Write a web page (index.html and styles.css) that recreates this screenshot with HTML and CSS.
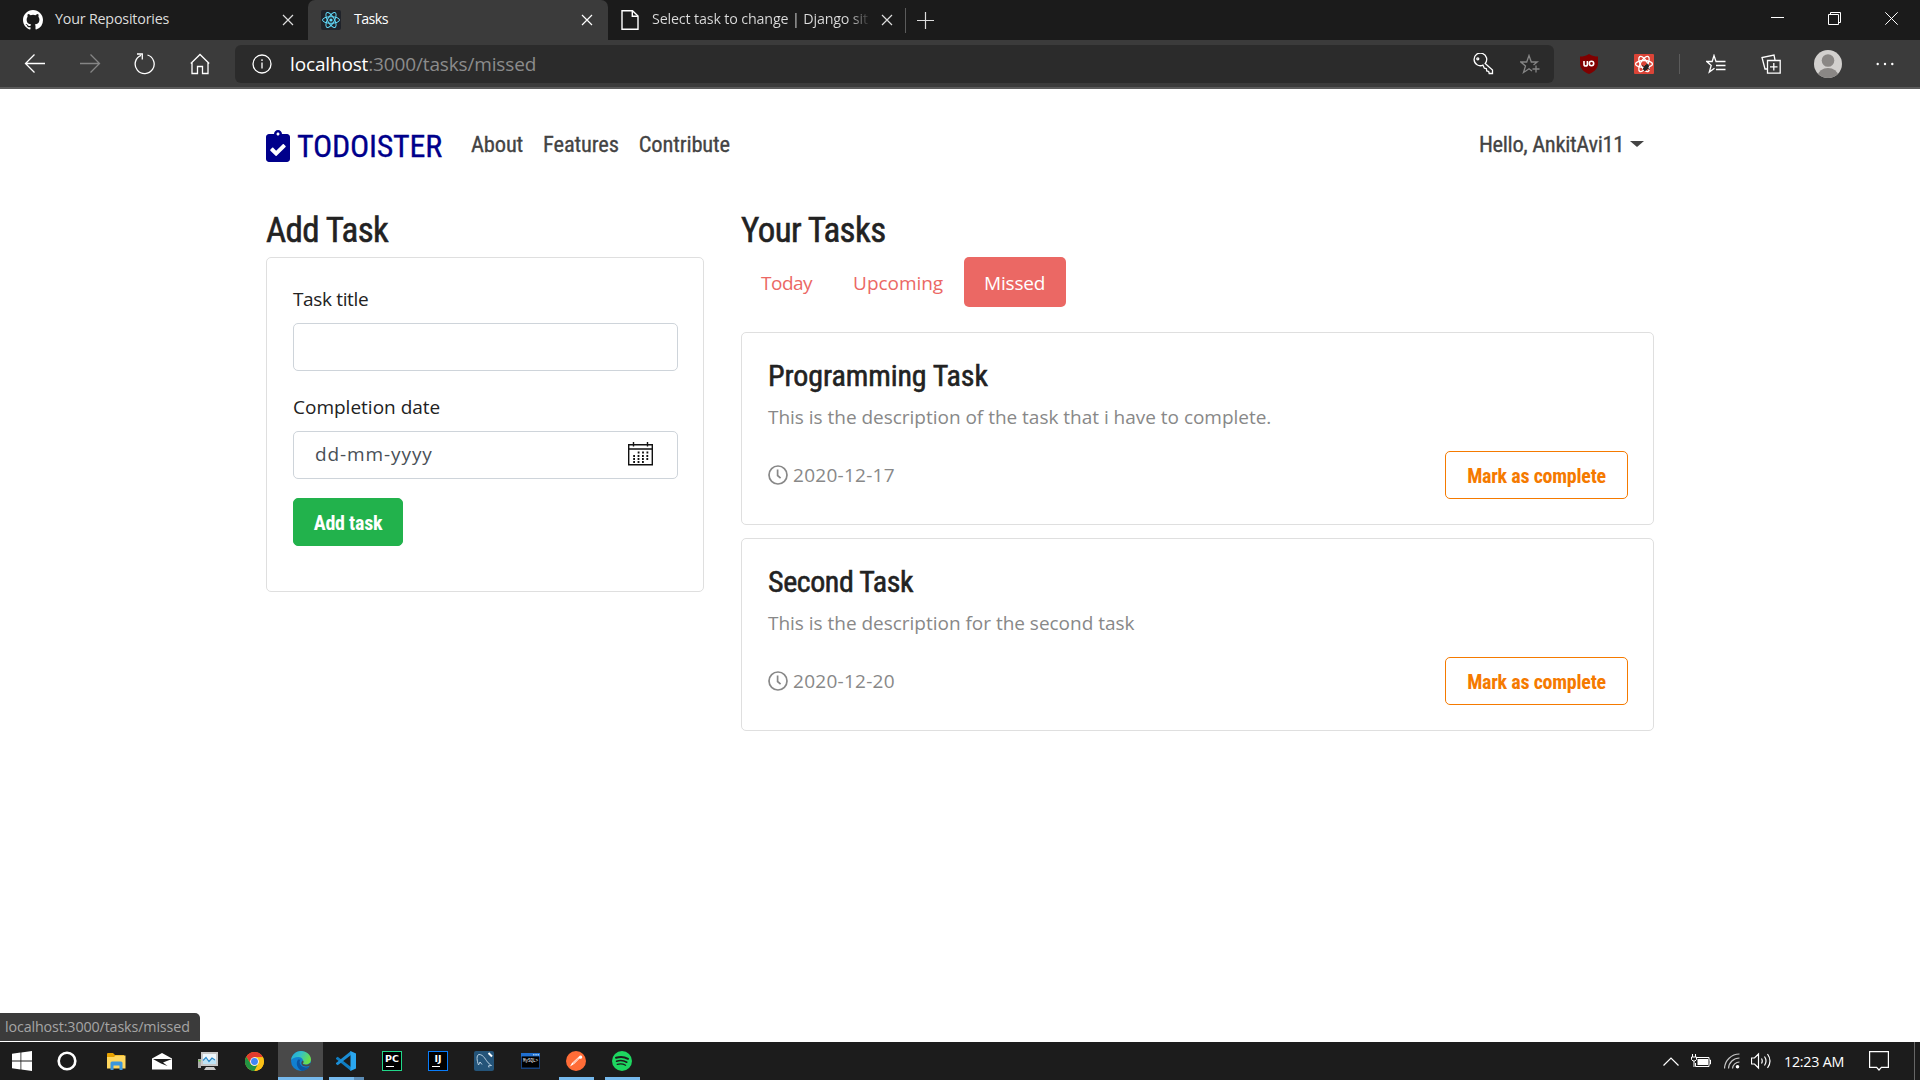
FILE: index.html
```html
<!DOCTYPE html>
<html lang="en">
<head>
<meta charset="utf-8">
<title>Tasks</title>
<link rel="stylesheet" href="styles.css">
</head>
<body>
<header class="tabbar">
  <div class="tab tab-first">
    <svg width="20" height="20" viewBox="0 0 16 16" fill="#fff"><path d="M8 0C3.58 0 0 3.58 0 8c0 3.54 2.29 6.53 5.47 7.59.4.07.55-.17.55-.38 0-.19-.01-.82-.01-1.49-2.01.37-2.53-.49-2.69-.94-.09-.23-.48-.94-.82-1.13-.28-.15-.68-.52-.01-.53.63-.01 1.08.58 1.23.82.72 1.21 1.87.87 2.33.66.07-.52.28-.87.51-1.07-1.78-.2-3.64-.89-3.64-3.95 0-.87.31-1.59.82-2.15-.08-.2-.36-1.02.08-2.12 0 0 .67-.21 2.2.82a7.6 7.6 0 0 1 4 0c1.53-1.04 2.2-.82 2.2-.82.44 1.1.16 1.92.08 2.12.51.56.82 1.27.82 2.15 0 3.07-1.87 3.75-3.65 3.95.29.25.54.73.54 1.48 0 1.07-.01 1.93-.01 2.2 0 .21.15.46.55.38A8.01 8.01 0 0 0 16 8c0-4.42-3.58-8-8-8z"/></svg>
    <span class="tab-title">Your Repositories</span>
    <svg class="x" width="12" height="12" viewBox="0 0 12 12"><path d="M1 1l10 10M11 1L1 11"/></svg>
  </div>
  <div class="tab tab-active">
    <svg width="20" height="20" viewBox="0 0 20 20"><rect width="20" height="20" rx="2" fill="#20232a"/><g fill="none" stroke="#61dafb" stroke-width="1"><ellipse cx="10" cy="10" rx="8.5" ry="3.3"/><ellipse cx="10" cy="10" rx="8.5" ry="3.3" transform="rotate(60 10 10)"/><ellipse cx="10" cy="10" rx="8.5" ry="3.3" transform="rotate(120 10 10)"/></g><circle cx="10" cy="10" r="1.6" fill="#61dafb"/></svg>
    <span class="tab-title tight">Tasks</span>
    <svg class="x" width="12" height="12" viewBox="0 0 12 12"><path d="M1 1l10 10M11 1L1 11"/></svg>
  </div>
  <div class="tab tab-last">
    <svg width="18" height="20" viewBox="0 0 18 20" fill="none" stroke="#fff" stroke-width="1.4"><path d="M1 .8h10.5L17 6v13.2H1z"/><path d="M11.3 1v5.2H17"/></svg>
    <span class="tab-title tab-fade">Select task to change | Django sit</span>
    <svg class="x" width="12" height="12" viewBox="0 0 12 12"><path d="M1 1l10 10M11 1L1 11"/></svg>
  </div>
  <i class="tab-rule"></i>
  <svg class="plus" width="17" height="17" viewBox="0 0 17 17"><path d="M8.5 0v17M0 8.5h17"/></svg>
  <div class="window-buttons">
    <svg width="13" height="13" viewBox="0 0 13 13"><path d="M0 5.5h13"/></svg>
    <svg width="13" height="13" viewBox="0 0 13 13"><path d="M.5 2.5h10v10H.5zM2.5 2.5v-2h10v10h-2"/></svg>
    <svg width="13" height="13" viewBox="0 0 13 13"><path d="M.3.3l12.4 12.4M12.7.3L.3 12.7"/></svg>
  </div>
</header>
<nav class="toolbar">
  <div class="nav-buttons">
    <svg width="22" height="22" viewBox="0 0 22 22"><path d="M21 10.5H1.5M10.5 1.5l-9 9 9 9"/></svg>
    <svg class="dim" width="22" height="22" viewBox="0 0 22 22"><path d="M1 10.5h19.5M11.500 1.5l9 9-9 9"/></svg>
    <svg width="22" height="22" viewBox="0 0 22 22"><path d="M7 2.300A9.500 9.500 0 1 0 13.500 2M3 1h5.300v5.500"/></svg>
    <svg width="22" height="22" viewBox="0 0 22 22"><path d="M3 9v11.500h5.500v-7h5v7H19V9M1.800 10.500L11 1.500l9.200 9"/></svg>
  </div>
  <div class="address">
    <svg width="20" height="20" viewBox="0 0 20 20"><circle cx="10" cy="10" r="9"/><path d="M10 8.500v6M10 5.200v1.800"/></svg>
    <span class="url"><b>localhost</b>:3000/tasks/missed</span>
    <svg class="key" width="22" height="22" viewBox="0 0 22 22"><path d="M13.200 10.500L20.500 17v3.500h-3.300l-.5-2-2-.6-.3-2.200-2-.5-1.500-3A6.300 6.300 0 1 1 13.200 10.500z"/><circle cx="5.800" cy="5.800" r="1"/></svg>
    <svg class="dim" width="20" height="20" viewBox="0 0 20 20"><path d="M12 17l-3-2.200L3.500 18.500l2-6.500L.8 8h5.900L9 1.500 11.300 8h5.900l-3.700 3M16 11.500v7M12.500 15h7"/></svg>
  </div>
  <svg class="ublock" width="18" height="20" viewBox="0 0 18 20"><path d="M9 0c3 2 6 2.500 9 2.500V9c0 6-4 9-9 11C4 18 0 15 0 9V2.500C3 2.500 6 2 9 0z" fill="#800000" stroke="none"/><path d="M4 7v3.200q0 1.800 1.700 1.800t1.700-1.800V7" stroke-width="1.600"/><circle cx="11.500" cy="9.500" r="2.200" stroke-width="1.600"/></svg>
  <svg class="devtool" width="20" height="20" viewBox="0 0 20 20"><rect width="20" height="20" rx="1" fill="#db4437" stroke="none"/><ellipse cx="10" cy="10" rx="8.500" ry="3.500"/><ellipse cx="10" cy="10" rx="8.500" ry="3.500" transform="rotate(60 10 10)"/><ellipse cx="10" cy="10" rx="8.500" ry="3.500" transform="rotate(120 10 10)"/><g stroke="#222" stroke-width=".9"><ellipse cx="12" cy="13.500" rx="1.800" ry="3.300" transform="rotate(35 12 13.500)" fill="#222"/><path d="M8 11.500l8 4M9 15l6-3M10.500 17l2-6M13 9.500l2 2"/></g></svg>
  <i class="tool-rule"></i>
  <svg class="favs" width="20" height="20" viewBox="0 0 20 20"><path d="M12 7.500h-2L8 1.500 6.200 7.500H.800L5.200 11.500 3.300 18 8.500 14.200M11 7.500h8.500M10 11.500h9.500M10 15.500h9.500"/></svg>
  <svg class="collections" width="20" height="20" viewBox="0 0 20 20"><path d="M6.500 6.500h12.700v12.700H6.500zM12.800 9v7.500M9 12.800h7.500M14 6L13 1 1 3.500 4 15h2"/></svg>
  <svg class="avatar" width="28" height="28" viewBox="0 0 28 28"><clipPath id="av"><circle cx="14" cy="14" r="14"/></clipPath><g clip-path="url(#av)" stroke="none"><path fill="#d2d0ce" d="M0 0h28v28H0z"/><circle cx="14" cy="10.500" r="6.300" fill="#8a8785"/><ellipse cx="14" cy="25.500" rx="10" ry="7.500" fill="#8a8785"/></g></svg>
  <svg class="dots" width="18" height="4" viewBox="0 0 18 4"><g fill="#fff" stroke="none"><circle cx="1.700" cy="2" r="1.200"/><circle cx="9" cy="2" r="1.200"/><circle cx="16.300" cy="2" r="1.200"/></g></svg>
</nav>
<main class="page">
  <header class="navbar">
    <a class="brand"><svg width="24" height="32" viewBox="0 0 384 512"><path fill="#00008b" d="M336 64h-80c0-35.300-28.700-64-64-64s-64 28.700-64 64H48C21.500 64 0 85.500 0 112v352c0 26.500 21.500 48 48 48h288c26.500 0 48-21.500 48-48V112c0-26.500-21.500-48-48-48zM192 40c13.300 0 24 10.700 24 24s-10.700 24-24 24-24-10.700-24-24 10.700-24 24-24zm121.200 231.800l-143 141.800c-4.700 4.700-12.300 4.600-17-.1l-82.600-83.300c-4.700-4.700-4.600-12.300.1-17L99.100 285c4.700-4.700 12.300-4.600 17 .1l46 46.400 106-105.200c4.700-4.700 12.300-4.600 17 .1l28.200 28.400c4.700 4.800 4.600 12.300-.1 17z"/></svg><span>TODOISTER</span></a>
    <a class="nav-link">About</a>
    <a class="nav-link">Features</a>
    <a class="nav-link">Contribute</a>
    <a class="nav-link user"><span>Hello, AnkitAvi11</span><i class="caret"></i></a>
  </header>
  <div class="columns">
    <section class="add">
      <h2>Add Task</h2>
      <form class="card form">
        <label class="label-title">Task title</label>
        <div class="field field-title"></div>
        <label>Completion date</label>
        <div class="field field-date"><span>dd-mm-yyyy</span>
          <svg width="25" height="24" viewBox="0 0 25 24"><path fill="none" stroke="#111" stroke-width="1.400" d="M.7 2.700h23.600v20H.7zM.7 7h23.600M5.500 0v4.500M19.500 0v4.500"/><path stroke="#111" stroke-width="1.800" stroke-dasharray="1.800 2.600" d="M9.700 10.500h11M5.200 14h16M5.200 17h16M5.200 20h12"/></svg>
        </div>
        <button class="btn btn-add" type="button">Add task</button>
      </form>
    </section>
    <section class="tasks">
      <h2>Your Tasks</h2>
      <div class="pills"><a class="pill tight">Today</a><a class="pill">Upcoming</a><a class="pill active">Missed</a></div>
      <article class="card task">
        <h4>Programming Task</h4>
        <p>This is the description of the task that i have to complete.</p>
        <div class="task-foot">
          <svg width="20" height="20" viewBox="0 0 20 20"><circle cx="10" cy="10" r="9"/><path d="M9.600 4.500v6l3 2.700"/></svg><span class="date">2020-12-17</span>
          <button class="btn btn-mark" type="button">Mark as complete</button>
        </div>
      </article>
      <article class="card task">
        <h4 class="second">Second Task</h4>
        <p>This is the description for the second task</p>
        <div class="task-foot">
          <svg width="20" height="20" viewBox="0 0 20 20"><circle cx="10" cy="10" r="9"/><path d="M9.600 4.500v6l3 2.700"/></svg><span class="date">2020-12-20</span>
          <button class="btn btn-mark" type="button">Mark as complete</button>
        </div>
      </article>
    </section>
  </div>
  <div class="status">localhost:3000/tasks/missed</div>
</main>
<footer class="taskbar">
  <div class="app start"><svg width="20" height="20" viewBox="0 0 20 20" fill="#fff"><path d="M0 2.800L8.500 1.600v8H0zM9.300 1.500L20 0v9.600H9.300zM0 10.400h8.500v8L0 17.200zM9.300 10.400H20V20L9.300 18.500z"/></svg></div>
  <div class="app cortana"><svg width="20" height="20" viewBox="0 0 20 20"><circle cx="10" cy="10" r="8.300" fill="none" stroke="#fff" stroke-width="2.600"/></svg></div>
  <div class="app"><svg width="19" height="17" viewBox="0 0 19 17"><path fill="#e8a200" d="M0 1q0-1 1-1h5l2 2h9v3H0z"/><path fill="#ffd75e" d="M0 4h7l1.500-1.500H18.500V15.500H0z"/><path fill="#3a96dd" d="M3.500 17V10q0-1.500 1.500-1.500h9q1.500 0 1.500 1.500v7h-3v-4.500h-6V17z"/></svg></div>
  <div class="app"><svg width="20" height="17" viewBox="0 0 20 17"><path fill="#fff" d="M0 5.500L10 0l10 5.500V16.500H0z"/><path fill="#1c1c1c" d="M1 6h19L11 9.500l4.500 3.500L9 10.500z"/></svg></div>
  <div class="app"><svg width="20" height="18" viewBox="0 0 20 18"><path fill="#c8c8c8" d="M3 0h17v14H3zM8 15h8l2 3H6z"/><path fill="#eef7fc" d="M5 2h13v10H5z"/><path fill="#bfe3f5" d="M5 9l3-3 3 3 2.500-2.500L18 8v4H5z"/><path fill="none" stroke="#2b88c8" stroke-width="1.200" d="M5 8.500l3-3 3 4 3-3.500 3 2"/><path fill="#aaa" d="M0 7h3v9H0z"/><path fill="#6fce3b" d="M.5 8h2v1.500h-2z"/></svg></div>
  <div class="app"><svg width="19" height="19" viewBox="0 0 48 48"><circle cx="24" cy="24" r="24" fill="#fbc116"/><path fill="#e33b2e" d="M24 13h21.300A24 24 0 0 0 3.200 12L14.500 29.500z"/><path fill="#229342" d="M3.200 12A24 24 0 0 0 24 48l9.500-18.500a11 11 0 0 1-19 0z"/><path fill="#fbc116" d="M24 13h21.300A24 24 0 0 1 24 48l9.500-18.500z"/><circle cx="24" cy="24" r="11" fill="#fff"/><circle cx="24" cy="24" r="8.700" fill="#4285f4"/></svg></div>
  <div class="app open focus"><svg width="20" height="20" viewBox="0 0 20 20"><defs><linearGradient id="eg" x1="0" y1="0" x2="1" y2=".4"><stop offset="0" stop-color="#1ea5df"/><stop offset=".5" stop-color="#35c1c5"/><stop offset="1" stop-color="#6be04a"/></linearGradient></defs><circle cx="10" cy="10" r="10" fill="#1180d0"/><path fill="url(#eg)" d="M.1 9C.6 4 4.700 0 10 0s10 4 10 8.500c0 3-2.500 5-5.500 5-2 0-3-.8-2.600-1.500C13 10.500 12 6 7.500 6 4 6 1 7.500.1 9z"/><path fill="#0c55a0" d="M7 8.500C4 13 7 18.500 11 19.900c3.500-.2 6-2 7.500-4.400-4 2-9 .5-9.800-3.500-.2-1.500.3-2.500 1-3.200z"/><path fill="#494949" d="M12 9.500c.8 1 .8 2-.2 2.800 0 1.700 4.500 2.300 7.500-.4l.7.500-.7 2.100c-4 2-8.500 1-9-2.200 0-1.200.7-2.200 1.700-2.800z"/></svg></div>
  <div class="app open vscode"><svg width="20" height="20" viewBox="0 0 20 20"><path fill="#0f7dc2" d="M0 7l1.700-1.300L15 16v4L0 8z"/><path fill="#1b8ed6" d="M0 13l1.700 1.300L15 4V0L0 12z"/><path fill="#2aa7f0" d="M14.500 0L20 2.400v15.200L14.500 20z"/></svg></div>
  <div class="app"><div class="jb jb-pc">PC</div></div>
  <div class="app"><div class="jb jb-ij">IJ</div></div>
  <div class="app"><svg width="20" height="20" viewBox="0 0 20 20"><rect width="20" height="20" rx="2" fill="#245479"/><path fill="none" stroke="#b8d0e2" stroke-width="1" d="M4.500 14C3 10 2 4 5 3.500c5 0 6.500 6 9.500 8.500 1 1.500 2 2 3 2.500l-3 .3.500 1.700M4.500 14l1.500-3 2 2.500"/><path stroke="#fff" stroke-width="2" d="M14.500 2l3.500 3.500"/></svg></div>
  <div class="app"><svg width="19" height="16" viewBox="0 0 19 16"><path fill="#17427d" d="M0 0h19v16H0z"/><path fill="#1f6fd0" d="M0 0h19v3.500H0z"/><path fill="#000" d="M1 3.500h17v11H1z"/><path fill="#9cc8f0" d="M12 1h1.500v1.500H12zM14.300 1h1.500v1.500h-1.500z"/><path fill="#9cc8f0" d="M16.500 1H18v1.500h-1.500z"/><text x="2" y="9" font-size="5" fill="#fff" textLength="15" lengthAdjust="spacingAndGlyphs" font-family="Liberation Mono, monospace">MySQL&gt;</text></svg></div>
  <div class="app open"><svg width="20" height="20" viewBox="0 0 20 20"><circle cx="10" cy="10" r="10" fill="#ff6c37"/><path fill="#fff" d="M13 5.500c1-1.500 3-1 3.200.5s-1.500 2.300-2.700 1.500L8 13l-4 2.500L6 12z"/><path stroke="#ff6c37" stroke-width=".7" d="M7 12.500l5.500-5.300"/></svg></div>
  <div class="app open"><svg width="20" height="20" viewBox="0 0 20 20"><circle cx="10" cy="10" r="10" fill="#1ed760"/><path fill="none" stroke="#1c1c1c" stroke-linecap="round" d="M4 6.800q6.500-2 12 1" stroke-width="2"/><path fill="none" stroke="#1c1c1c" stroke-linecap="round" d="M4.600 10.200q5.500-1.700 10.200 1" stroke-width="1.600"/><path fill="none" stroke="#1c1c1c" stroke-linecap="round" d="M5.200 13.400q4.500-1.300 8.400.9" stroke-width="1.300"/></svg></div>
  <div class="tray">
    <svg class="chev" width="16" height="9" viewBox="0 0 16 9"><path d="M.5 8.500L8 1l7.500 7.500"/></svg>
    <svg class="batt" width="20" height="14" viewBox="0 0 20 14"><path d="M5 3.500h13v9H4.500V9M18.500 6h1v4h-1M1.500 0v3M4.500 0v3M.5 3h5v2.500L4 7H2L.5 5.500zM3 7v6" stroke-width="1"/><path fill="#fff" stroke="none" d="M6.500 5H17v6H6.500z"/></svg>
    <svg class="wifi" width="16" height="16" viewBox="0 0 16 16"><path d="M.5 15.500A15 15 0 0 1 15.500 1M4.500 15.500A11 11 0 0 1 15.500 5M8.500 15.500a7 7 0 0 1 7-6.500" opacity=".75"/><circle cx="13.500" cy="13.800" r="1.800" fill="#fff" stroke="none"/></svg>
    <svg class="vol" width="21" height="18" viewBox="0 0 21 18"><path d="M.5 6h3L7.500 2v14L3.500 12h-3zM10.500 6.500q1.500 2.500 0 5M13.500 4.500q3 4.500 0 9M16.500 2q5 7 0 14"/></svg>
    <span class="clock">12:23 AM</span>
    <svg class="notif" width="20" height="20" viewBox="0 0 20 20"><path d="M.6.600h18.800v15.800h-7L10 19l-2.400-2.600h-7z"/></svg>
    <i class="peek"></i>
  </div>
</footer>
</body>
</html>
```
FILE: styles.css
```css
* { box-sizing: border-box; }
body { margin: 0; width: 1920px; height: 1080px; overflow: hidden; display: flex; flex-direction: column; background: #fff; font-family: "Open Sans", "Noto Sans", sans-serif; }
svg { flex: none; display: block; }
span { white-space: nowrap; }

.tabbar { height: 40px; flex: none; display: flex; align-items: center; background: #1b1b1b; color: #ddd; font-size: 14.3px; }
.tabbar .x, .plus, .window-buttons svg { fill: none; stroke: #ddd; stroke-width: 1.2; }
.tab { display: flex; align-items: center; height: 40px; gap: 12px; }
.tab .x { margin-left: auto; }
.tab-title { line-height: 36px; height: 38px; letter-spacing: -0.2px; }
.tab-title.tight { letter-spacing: -0.6px; }
.tab-first { width: 308px; padding: 0 14px 0 23px; }
.tab-active { width: 300px; padding: 0 15px 0 13px; background: #3b3b3b; border-radius: 7px 7px 0 0; color: #fff; gap: 13px; }
.tab-active .x { stroke: #fff; }
.tab-last { width: 297px; padding: 0 13px 0 13px; gap: 13px; }
.tab-fade { letter-spacing: -0.16px; color: transparent; background: linear-gradient(90deg, #ddd 91%, #333 100%); background-clip: text; -webkit-background-clip: text; }
.tab-rule { width: 1px; height: 25px; background: #5b5b5b; }
.plus { margin-left: 11px; }
.window-buttons { margin-left: auto; display: flex; gap: 44px; padding: 0 22px 4px 0; }
.window-buttons svg { stroke: #fff; stroke-width: 1; }

.toolbar { height: 49px; flex: none; display: flex; align-items: center; background: #3b3b3b; border-bottom: 2px solid #5b5b5b; }
.toolbar svg { fill: none; stroke: #fff; stroke-width: 1.3; }
.toolbar svg.dim { stroke: #858585; }
.nav-buttons { display: flex; gap: 33px; padding-left: 24px; width: 235px; }
.address { width: 1319px; height: 38px; border-radius: 6px; background: #2b2b2b; display: flex; align-items: center; padding: 0 14px 0 17px; font-size: 19px; color: #8c8c8c; }
.url { margin-left: 18px; letter-spacing: -0.15px; }
.url b { font-weight: 400; color: #fff; }
.key { margin-left: auto; margin-right: 26px; }
.ublock { margin-left: 26px; }
.devtool { margin-left: 36px; }
.tool-rule { width: 1px; height: 20px; background: #5b5b5b; margin-left: 25px; }
.favs { margin-left: 26px; }
.collections { margin-left: 35px; }
.avatar { margin-left: 33px; }
.dots { margin-left: 34px; }

.page { flex: 1; display: flex; flex-direction: column; padding: 0 266px; position: relative; color: #222; font-size: 19px; }
.navbar { display: flex; align-items: flex-start; padding-top: 41px; height: 123px; font: 400 22.5px/28px Roboto, sans-serif; font-stretch: 75%; letter-spacing: -0.16px; color: #444; -webkit-text-stroke: 0.3px; }
.brand { display: flex; gap: 7px; color: #00008b; font-size: 32px; width: 205px; line-height: 33px; letter-spacing: -0.24px; }
.nav-link { margin-right: 20px; }
.user { margin: 0 10px 0 auto; display: flex; align-items: center; gap: 6px; letter-spacing: -0.35px; }
.caret { border: 7px solid transparent; border-top: 6px solid #444; border-bottom: 0; }
.columns { display: flex; gap: 37px; }
.add { width: 438px; }
.tasks { width: 913px; }
h2, h4 { margin: 0; font-family: Roboto, sans-serif; font-stretch: 75%; font-weight: 400; -webkit-text-stroke: 0.55px; }
h2 { font-size: 35px; line-height: 38px; height: 45px; letter-spacing: -0.6px; }
h4 { font-size: 30px; line-height: 33px; letter-spacing: -0.1px; }
h4.second { letter-spacing: -0.43px; }
.card { border: 1px solid #dfdfdf; border-radius: 5px; padding: 26px 25px 26px 26px; }
.form { height: 335px; }
label { display: block; line-height: 30px; }
.label-title { letter-spacing: -0.35px; }
.field { height: 48px; border: 1px solid #ced4da; border-radius: 5px; margin: 9px 0 21px; }
.field-date { display: flex; align-items: center; justify-content: space-between; margin-bottom: 19px; padding: 0 24px 2px 21px; color: #495057; letter-spacing: 0.9px; }
.btn { height: 48px; border-radius: 5px; border: 1px solid #22b24c; padding: 1px 0 0; font: 700 20px/30px Roboto, sans-serif; font-stretch: 75%; letter-spacing: -0.25px; display: block; }
.btn-add { width: 110px; background: #22b24c; color: #fff; }
.pills { display: flex; gap: 1px; height: 50px; margin-bottom: 25px; color: #eb6864; }
.pill { padding: 11px 20px 9px; line-height: 30px; border-radius: 5px; letter-spacing: -0.05px; }
.pill.tight { letter-spacing: -0.5px; }
.pill.active { width: 102px; background: #eb6864; color: #fff; letter-spacing: -0.2px; }
.task { height: 193px; margin-bottom: 13px; }
.task p { margin: 10px 0 19px; line-height: 30px; color: #888; letter-spacing: -0.02px; }
.task-foot { display: flex; align-items: center; color: #888; }
.task-foot svg { fill: none; stroke: #888; stroke-width: 1.7; }
.date { margin-left: 5px; letter-spacing: 0.27px; }
.btn-mark { width: 183px; margin-left: auto; background: #fff; border-color: #f57a00; color: #f57a00; }
.status { position: absolute; left: 0; bottom: 1px; width: 200px; height: 28px; background: #3b3b3b; color: #a5a5a5; border-radius: 0 5px 0 0; font-size: 14.3px; line-height: 28px; padding-left: 5px; letter-spacing: -0.13px; }

.taskbar { height: 38px; flex: none; display: flex; background: #1c1c1c; }
.app { width: 46px; height: 38px; display: flex; align-items: center; justify-content: center; background: linear-gradient(#76b9ed, #76b9ed) center bottom / 0 3px no-repeat; }
.start { width: 44px; }
.cortana { margin-right: 3px; }
.open { background-size: 35px 3px; }
.focus { width: 45px; margin-left: 1px; background-color: #494949; background-size: 45px 3px; }
.vscode { background-image: linear-gradient(90deg, #76b9ed 72%, #5c8cb5 72%); }
.jb { width: 20px; height: 20px; background: #000; border: 1px solid #21d789; color: #fff; font: 700 9.5px/13px "DejaVu Sans", sans-serif; text-align: center; }
.jb::after { content: ""; display: block; width: 8px; height: 1px; margin: 1px 0 0 3px; background: #fff; }
.jb-ij { border-color: #087cfa; }
.tray { margin-left: auto; display: flex; align-items: center; }
.tray svg { fill: none; stroke: #fff; stroke-width: 1.2; }
.batt { margin-left: 12px; }
.wifi { margin-left: 13px; }
.vol { margin-left: 11px; }
.clock { margin-left: 12px; color: #fff; font-size: 14.3px; letter-spacing: -0.25px; width: 61px; }
.notif { margin-left: 24px; }
.peek { width: 1px; height: 38px; background: #666; margin: 0 5px 0 25px; }
```
